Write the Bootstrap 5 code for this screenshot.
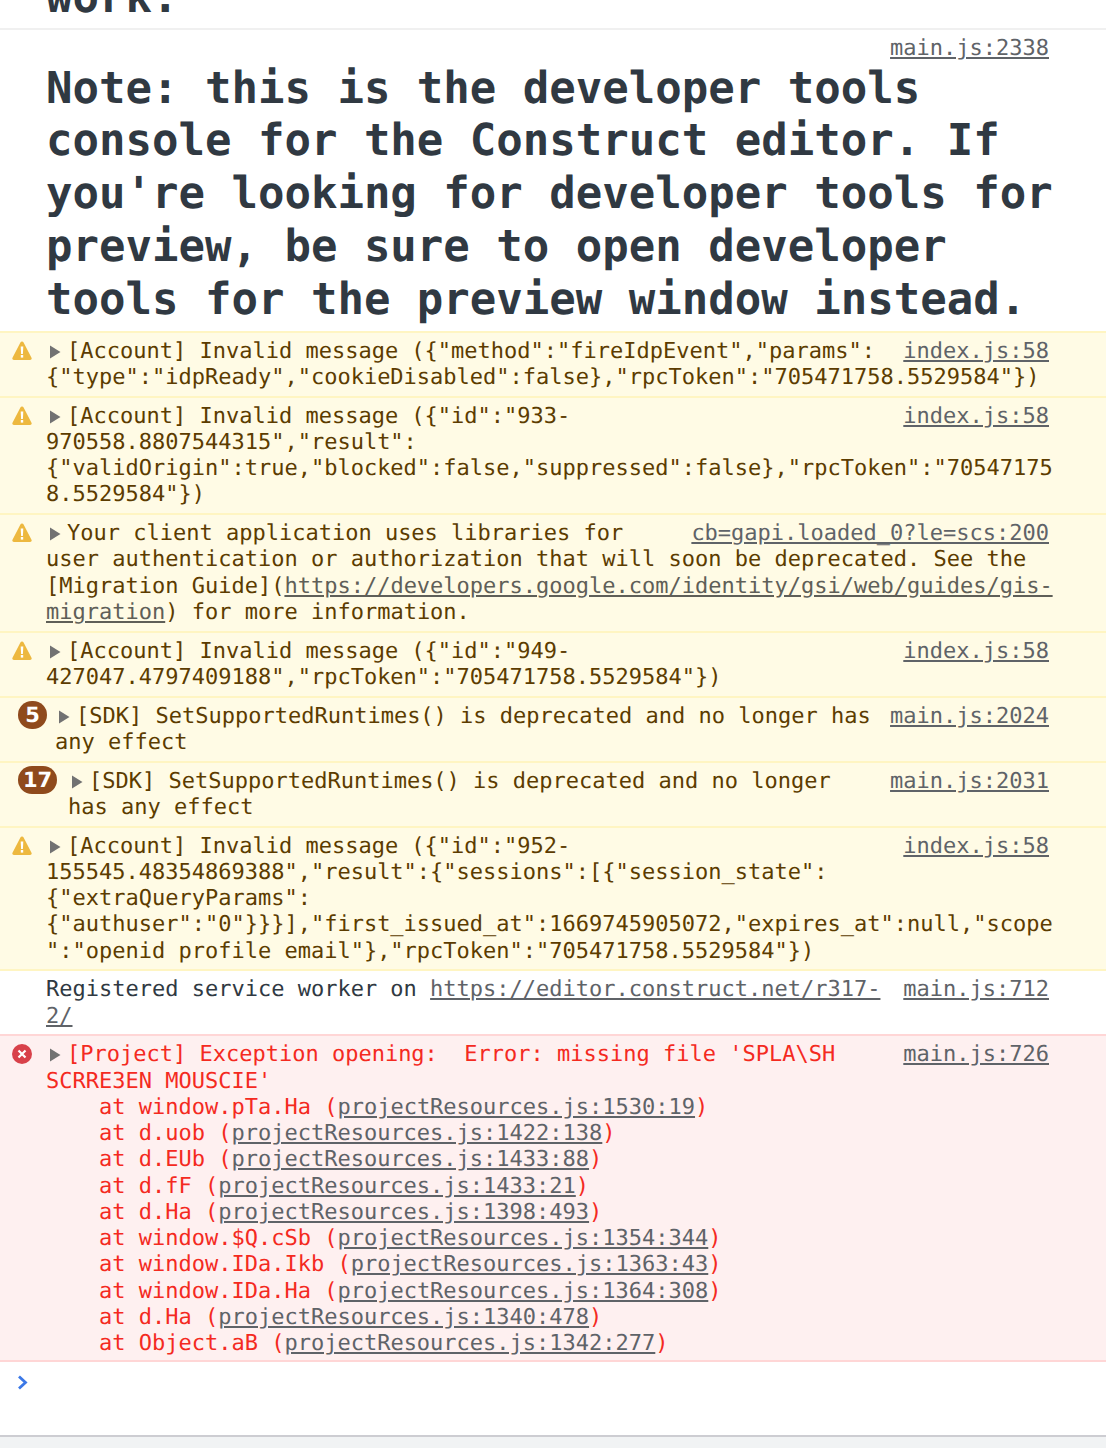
<!doctype html>
<html lang="en"><head><meta charset="utf-8">
<link href="https://cdn.jsdelivr.net/npm/bootstrap@5.3.0/dist/css/bootstrap.min.css" rel="stylesheet">
<style>
html,body{height:100%}
body{background:#f1f3f4;font-family:"DejaVu Sans Mono",monospace;font-size:22px;line-height:26.25px;color:#303942;overflow:hidden;text-rendering:geometricPrecision}
.cons{background:#fff;height:1435px;border-bottom:2px solid #cdcdd2;box-sizing:content-box;overflow:hidden}
.msg{border-top:2px solid #f0f0f0;padding:6px 0 4.5px;display:flex}
.msg-top{height:28px;border-top:0;padding:0 0 3px;align-items:flex-end;overflow:hidden}
.gut{width:46px;flex:none;position:relative}
.gut-5{width:55px}.gut-17{width:68px}
.body{flex:1;min-width:0;padding-right:57px;white-space:pre}
.big{font-size:44px;line-height:52.8px;font-weight:700}
.src{float:right;color:#5f6368;text-decoration:underline;margin-left:20px}
.msg-note{padding:6.4px 0 4px}
.src-block{display:block;float:none;text-align:right;margin:0}
.warn{background:#fffbe5;border-top-color:#fff5c2;color:#5c3c00}
.after-warn{border-top-color:#fff5c2}
.err{background:#fef0f0;border-top-color:#ffd6d6;border-bottom:2px solid #ffd6d6;color:#f42a1f;padding-bottom:2.2px}
.lnk{color:#5f6368;text-decoration:underline}
.warn .lnk{color:#5f5f58}
.tri{display:inline-block;width:21px;height:14px;vertical-align:-1px}
.ic{position:absolute;left:12px;top:2px;width:20px;height:20px}
.cnt{position:absolute;left:18px;top:-3px;height:28px;min-width:29px;padding:0 5px;border-radius:14px;background:#8f4a1c;color:#fff;font-family:"DejaVu Sans",sans-serif;font-weight:700;font-size:21px;line-height:28px;text-align:center}
.prompt{padding:13px 0 0 17px}
</style></head><body>
<svg width="0" height="0" class="position-absolute"><defs>
<symbol id="ar" viewBox="0 0 21 14"><path d="M4 .5l10.500 6.500-10.500 6.500z" fill="#727272"/></symbol>
<symbol id="wa" viewBox="0 0 20 20"><path d="M10 .5c.7 0 1.300.4 1.600 1l7.900 15.300c.6 1.100-.2 2.200-1.400 2.200H1.900C.7 19-.1 17.900.5 16.800L8.400 1.500c.3-.6.900-1 1.600-1z" fill="#edb83f"/><path d="M8.700 5.500h2.600l-.4 7.500H9.100z" fill="#fff"/><rect x="8.800" y="14" width="2.400" height="2.600" fill="#fff"/></symbol>
<symbol id="er" viewBox="0 0 20 20"><circle cx="10" cy="10" r="10" fill="#d8414a"/><path d="M6.500 6.500l7 7m0-7l-7 7" stroke="#fff" stroke-width="2.200" fill="none"/></symbol>
</defs></svg>
<main class="cons">
<div class="msg msg-top"><div class="gut"></div><div class="body big">work.</div></div>
<div class="msg msg-note"><div class="gut"></div><div class="body"><a class="src src-block">main.js:2338</a><div class="big">Note: this is the developer tools
console for the Construct editor. If
you're looking for developer tools for
preview, be sure to open developer
tools for the preview window instead.</div></div></div>

<div class="msg warn"><div class="gut"><svg class="ic"><use href="#wa"/></svg></div><div class="body"><a class="src">index.js:58</a><svg class="tri"><use href="#ar"/></svg>[Account] Invalid message ({"method":"fireIdpEvent","params":
{"type":"idpReady","cookieDisabled":false},"rpcToken":"705471758.5529584"})</div></div>

<div class="msg warn"><div class="gut"><svg class="ic"><use href="#wa"/></svg></div><div class="body"><a class="src">index.js:58</a><svg class="tri"><use href="#ar"/></svg>[Account] Invalid message ({"id":"933-
970558.8807544315","result":
{"validOrigin":true,"blocked":false,"suppressed":false},"rpcToken":"70547175
8.5529584"})</div></div>

<div class="msg warn"><div class="gut"><svg class="ic"><use href="#wa"/></svg></div><div class="body"><a class="src">cb=gapi.loaded_0?le=scs:200</a><svg class="tri"><use href="#ar"/></svg>Your client application uses libraries for
user authentication or authorization that will soon be deprecated. See the
[Migration Guide](<a class="lnk">https://developers.google.com/identity/gsi/web/guides/gis-
migration</a>) for more information.</div></div>

<div class="msg warn"><div class="gut"><svg class="ic"><use href="#wa"/></svg></div><div class="body"><a class="src">index.js:58</a><svg class="tri"><use href="#ar"/></svg>[Account] Invalid message ({"id":"949-
427047.4797409188","rpcToken":"705471758.5529584"})</div></div>

<div class="msg warn"><div class="gut gut-5"><span class="cnt">5</span></div><div class="body"><a class="src">main.js:2024</a><svg class="tri"><use href="#ar"/></svg>[SDK] SetSupportedRuntimes() is deprecated and no longer has
any effect</div></div>

<div class="msg warn"><div class="gut gut-17"><span class="cnt">17</span></div><div class="body"><a class="src">main.js:2031</a><svg class="tri"><use href="#ar"/></svg>[SDK] SetSupportedRuntimes() is deprecated and no longer
has any effect</div></div>

<div class="msg warn"><div class="gut"><svg class="ic"><use href="#wa"/></svg></div><div class="body"><a class="src">index.js:58</a><svg class="tri"><use href="#ar"/></svg>[Account] Invalid message ({"id":"952-
155545.48354869388","result":{"sessions":[{"session_state":
{"extraQueryParams":
{"authuser":"0"}}}],"first_issued_at":1669745905072,"expires_at":null,"scope
":"openid profile email"},"rpcToken":"705471758.5529584"})</div></div>

<div class="msg after-warn"><div class="gut"></div><div class="body"><a class="src">main.js:712</a>Registered service worker on <a class="lnk">https://editor.construct.net/r317-
2/</a></div></div>

<div class="msg err"><div class="gut"><svg class="ic"><use href="#er"/></svg></div><div class="body"><a class="src">main.js:726</a><svg class="tri"><use href="#ar"/></svg>[Project] Exception opening:  Error: missing file 'SPLA\SH
SCRRE3EN MOUSCIE'
    at window.pTa.Ha (<a class="lnk">projectResources.js:1530:19</a>)
    at d.uob (<a class="lnk">projectResources.js:1422:138</a>)
    at d.EUb (<a class="lnk">projectResources.js:1433:88</a>)
    at d.fF (<a class="lnk">projectResources.js:1433:21</a>)
    at d.Ha (<a class="lnk">projectResources.js:1398:493</a>)
    at window.$Q.cSb (<a class="lnk">projectResources.js:1354:344</a>)
    at window.IDa.Ikb (<a class="lnk">projectResources.js:1363:43</a>)
    at window.IDa.Ha (<a class="lnk">projectResources.js:1364:308</a>)
    at d.Ha (<a class="lnk">projectResources.js:1340:478</a>)
    at Object.aB (<a class="lnk">projectResources.js:1342:277</a>)</div></div>

<div class="prompt"><svg width="11" height="15" viewBox="0 0 11 15" class="d-block"><path d="M2 1.500l6.500 6-6.500 6" fill="none" stroke="#3b78e7" stroke-width="2.800"/></svg></div>
</main>
<script src="https://cdn.jsdelivr.net/npm/bootstrap@5.3.0/dist/js/bootstrap.bundle.min.js"></script>
</body></html>
